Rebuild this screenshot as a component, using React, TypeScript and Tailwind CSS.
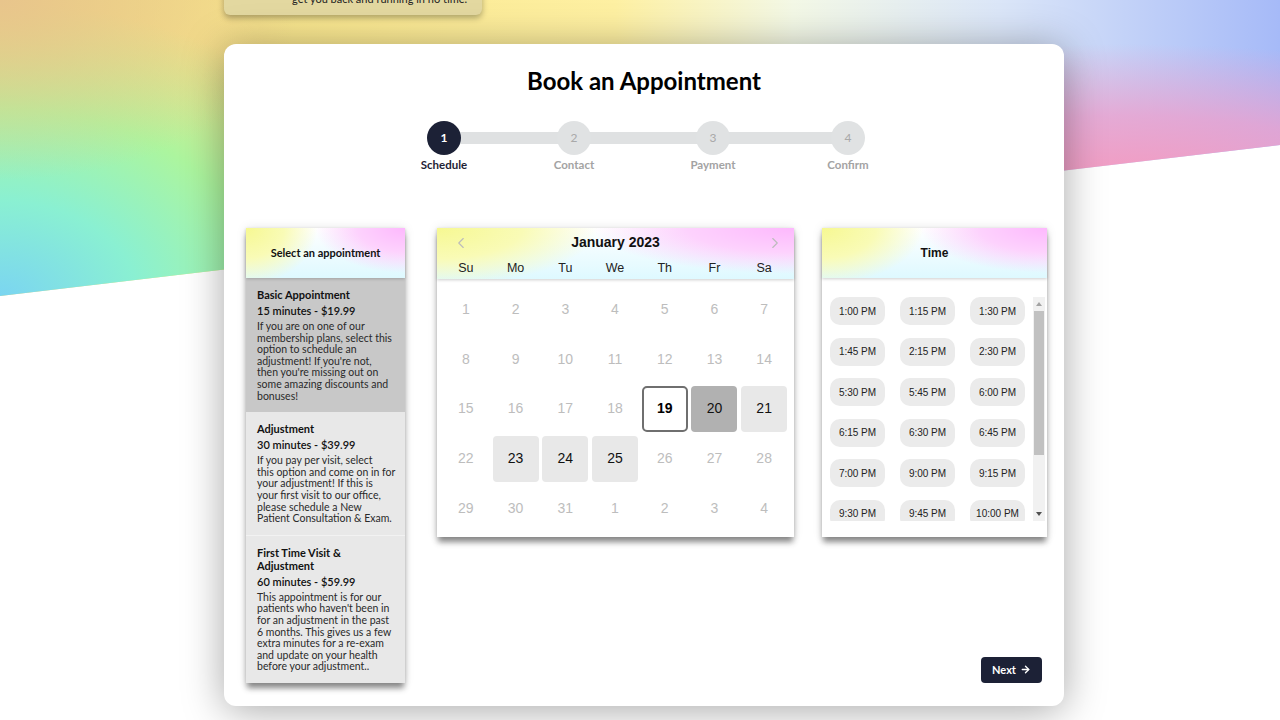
import { ChevronLeft, ChevronRight, ArrowRight } from 'lucide-react';

const items = [
  {
    title: ['Basic Appointment'],
    meta: '15 minutes - $19.99',
    lines: [
      'If you are on one of our',
      'membership plans, select this',
      'option to schedule an',
      "adjustment! If you're not,",
      "then you're missing out on",
      'some amazing discounts and',
      'bonuses!',
    ],
    selected: true,
  },
  {
    title: ['Adjustment'],
    meta: '30 minutes - $39.99',
    lines: [
      'If you pay per visit, select',
      'this option and come on in for',
      'your adjustment! If this is',
      'your first visit to our office,',
      'please schedule a New',
      'Patient Consultation & Exam.',
    ],
    selected: false,
  },
  {
    title: ['First Time Visit &', 'Adjustment'],
    meta: '60 minutes - $59.99',
    lines: [
      'This appointment is for our',
      "patients who haven't been in",
      'for an adjustment in the past',
      '6 months. This gives us a few',
      'extra minutes for a re-exam',
      'and update on your health',
      'before your adjustment..',
    ],
    selected: false,
  },
];

const weeks = [
  [1, 2, 3, 4, 5, 6, 7],
  [8, 9, 10, 11, 12, 13, 14],
  [15, 16, 17, 18, 19, 20, 21],
  [22, 23, 24, 25, 26, 27, 28],
  [29, 30, 31, 1, 2, 3, 4],
];

const times = [
  '1:00 PM', '1:15 PM', '1:30 PM',
  '1:45 PM', '2:15 PM', '2:30 PM',
  '5:30 PM', '5:45 PM', '6:00 PM',
  '6:15 PM', '6:30 PM', '6:45 PM',
  '7:00 PM', '9:00 PM', '9:15 PM',
  '9:30 PM', '9:45 PM', '10:00 PM',
  '10:15 PM', '10:30 PM', '10:45 PM',
];

const steps = [
  { n: 1, label: 'Schedule' },
  { n: 2, label: 'Contact' },
  { n: 3, label: 'Payment' },
  { n: 4, label: 'Confirm' },
];

const headerBg =
  'bg-[radial-gradient(ellipse_60%_150%_at_0%_0%,#f6f892_0%,#f9fbb6_40%,rgba(255,255,255,0)_75%),radial-gradient(ellipse_75%_120%_at_100%_0%,#fdb8fd_0%,#fdd2fd_40%,rgba(255,255,255,0)_75%),linear-gradient(#ffffff,#def9ff)]';

const panelShadow =
  'shadow-[0_6px_6px_-1px_rgba(0,0,0,0.45),0_0_10px_rgba(0,0,0,0.10)]';

function dayClass(w: number, d: number) {
  if (w === 2 && d === 19)
    return 'bg-white border-2 border-[#6f6f6f] rounded-[5px] text-black font-bold';
  if (w === 2 && d === 20) return 'bg-[#b1b1b1] rounded-[4px] text-[#111]';
  if ((w === 2 && d === 21) || (w === 3 && (d === 23 || d === 24 || d === 25)))
    return 'bg-[#e8e8e8] rounded-[4px] text-[#111]';
  return 'text-[#bdbdbd]';
}

export default function App() {
  return (
    <div className="relative min-h-screen w-full overflow-hidden bg-white [font-family:Lato,'Noto_Sans',sans-serif]">
      {/* decorative gradient background */}
      <div className="absolute inset-x-0 top-0 h-[300px] [clip-path:polygon(0_0,100%_0,100%_145px,0_296px)] bg-[radial-gradient(ellipse_300px_180px_at_0%_0%,#e8c58c_0%,rgba(232,197,140,0)_100%),radial-gradient(ellipse_460px_330px_at_0%_100%,#7ad4f2_0%,#8af0d2_30%,#acf59e_58%,rgba(200,240,120,0)_90%),radial-gradient(ellipse_520px_130px_at_88%_58%,#f29cc2_0%,rgba(236,160,205,0.8)_45%,rgba(230,170,215,0)_100%),linear-gradient(to_right,#eed97e_0%,#fbe993_30%,#fef0a2_48%,#f3f8e6_62%,#dbe6f8_78%,#a6baf8_100%)]" />

      {/* partial notification at top */}
      <div className="absolute left-[224px] top-[-32px] w-[258px] h-[47px] rounded-[6px] bg-[#e3d8a0] shadow-[0_3px_6px_rgba(0,0,0,0.3)] pl-[68px] pt-[24px] text-[11px] leading-[14px] text-[#222]">
        get you back and running in no time.
      </div>

      <div className="relative pt-[44px] pl-[224px]">
        <div className="w-[840px] h-[662px] rounded-[12px] bg-white shadow-[0_4px_40px_rgba(0,0,0,0.35)] flex flex-col pt-[22px]">
          <h1 className="text-center text-[24px] leading-[30px] font-bold text-black">
            Book an Appointment
          </h1>

          {/* stepper */}
          <div className="relative ml-[190px] mt-[25px] flex w-fit">
            <div className="absolute left-[30px] right-[30px] top-[11px] h-[12px] bg-[#dfe1e2]" />
            {steps.map((s, i) => (
              <div
                key={s.n}
                className={
                  'relative w-[60px] flex flex-col items-center ' +
                  (i === 1 ? 'ml-[70px]' : i === 2 ? 'ml-[79px]' : i === 3 ? 'ml-[75px]' : '')
                }
              >
                <div
                  className={
                    'w-[34px] h-[34px] rounded-full flex items-center justify-center text-[12px] ' +
                    (i === 0 ? 'bg-[#1c2136] text-white font-bold' : 'bg-[#e0e2e3] text-[#a9a9a9]')
                  }
                >
                  {s.n}
                </div>
                <div
                  className={
                    'mt-[3px] text-[11.5px] leading-[14px] font-bold whitespace-nowrap ' +
                    (i === 0 ? 'text-[#1e2235]' : 'text-[#a3a3a3]')
                  }
                >
                  {s.label}
                </div>
              </div>
            ))}
          </div>

          {/* panels */}
          <div className="flex items-stretch mt-[56px]">
            {/* appointment list */}
            <div className={'ml-[22px] w-[159px] self-start bg-[#e8e8e8] ' + panelShadow}>
              <div className={'relative z-10 h-[50px] flex items-center justify-center text-[11px] font-bold text-[#111] shadow-[0_1px_3px_rgba(0,0,0,0.2)] ' + headerBg}>
                Select an appointment
              </div>
              {items.map((it, idx) => (
                <div
                  key={idx}
                  className={
                    'pl-[11px] pr-[6px] pt-[10px] pb-[10px] ' +
                    (it.selected ? 'bg-[#c8c8c8]' : 'bg-[#e8e8e8]') +
                    (idx === 2 ? ' border-t border-[#f2f2f2]' : '')
                  }
                >
                  {it.title.map((t) => (
                    <div key={t} className="text-[11px] leading-[13px] font-bold text-[#111] whitespace-nowrap">
                      {t}
                    </div>
                  ))}
                  <div className="mt-[3px] text-[11px] leading-[13px] font-semibold text-[#111] whitespace-nowrap">
                    {it.meta}
                  </div>
                  <div className="mt-[4px] text-[10.5px] leading-[11.6px] text-[#2a2a2a]">
                    {it.lines.map((l) => (
                      <div key={l} className="whitespace-nowrap">{l}</div>
                    ))}
                  </div>
                </div>
              ))}
            </div>

            {/* calendar */}
            <div className={'ml-[32px] w-[357px] self-start bg-white [font-family:"Liberation_Sans",Arial,sans-serif] ' + panelShadow}>
              <div className={'relative z-10 h-[51px] px-[4px] shadow-[0_1px_3px_rgba(0,0,0,0.2)] ' + headerBg}>
                <div className="relative h-[29px] flex items-center justify-center">
                  <ChevronLeft className="absolute left-[11px] top-[6px] text-[#bcbcbc]" size={18} strokeWidth={1.5} />
                  <span className="text-[14px] font-bold text-[#111]">January 2023</span>
                  <ChevronRight className="absolute right-[6px] top-[6px] text-[#bcbcbc]" size={18} strokeWidth={1.5} />
                </div>
                <div className="grid grid-cols-7 w-[348px]">
                  {['Su', 'Mo', 'Tu', 'We', 'Th', 'Fr', 'Sa'].map((d) => (
                    <div key={d} className="text-center text-[12.5px] leading-[22px] text-[#222]">
                      {d}
                    </div>
                  ))}
                </div>
              </div>
              <div className="pl-[4px] pt-[6px] pb-[4px]">
                <div className="grid grid-cols-7 w-[348px]">
                  {weeks.map((wk, w) =>
                    wk.map((d) => (
                      <div key={w + '-' + d} className="h-[49.6px] flex items-center justify-center">
                        <div className={'w-[46px] h-[46px] flex items-center justify-center text-[14px] ' + dayClass(w, d)}>
                          {d}
                        </div>
                      </div>
                    ))
                  )}
                </div>
              </div>
            </div>

            {/* time column */}
            <div className="ml-[28px] w-[225px] flex flex-col">
              <div className={'bg-white [font-family:"Liberation_Sans",Arial,sans-serif] ' + panelShadow}>
                <div className={'relative z-10 h-[50px] flex items-center justify-center text-[12px] font-bold text-[#111] shadow-[0_1px_3px_rgba(0,0,0,0.2)] ' + headerBg}>
                  Time
                </div>
                <div className="flex pl-[8px] pr-[2px] pt-[19px] pb-[16px]">
                  <div className="flex-1 h-[224px] overflow-hidden">
                    <div className="grid grid-cols-[55px_55px_55px] gap-x-[15px] gap-y-[12.5px]">
                      {times.map((t) => (
                        <div
                          key={t}
                          className="h-[28px] rounded-[10px] bg-[#ebebeb] flex items-center justify-center text-[10px] text-[#222] whitespace-nowrap"
                        >
                          {t}
                        </div>
                      ))}
                    </div>
                  </div>
                  <div className="w-[12px] h-[224px] bg-[#f1f1f1] flex flex-col items-center">
                    <div className="h-[14px] flex items-center justify-center">
                      <div className="w-0 h-0 border-l-[3.5px] border-r-[3.5px] border-b-[4px] border-l-transparent border-r-transparent border-b-[#a3a3a3]" />
                    </div>
                    <div className="w-[10px] h-[144px] bg-[#c1c1c1]" />
                    <div className="flex-1" />
                    <div className="h-[14px] flex items-center justify-center">
                      <div className="w-0 h-0 border-l-[3.5px] border-r-[3.5px] border-t-[4px] border-l-transparent border-r-transparent border-t-[#505050]" />
                    </div>
                  </div>
                </div>
              </div>
              <div className="flex-1" />
              <div className="flex justify-end pr-[5px]">
                <button className="h-[26px] w-[61px] rounded-[4px] bg-[#1c2136] text-white text-[11px] font-bold flex items-center justify-center gap-[4px]">
                  Next
                  <ArrowRight size={11} strokeWidth={3} />
                </button>
              </div>
            </div>
          </div>
        </div>
      </div>
    </div>
  );
}
